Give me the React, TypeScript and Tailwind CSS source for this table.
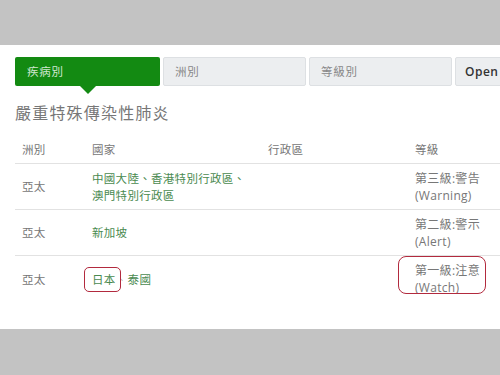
const font = { fontFamily: '"Open Sans", "Noto Sans CJK TC", sans-serif' };

const tabs = ["疾病別", "洲別", "等級別", "Open"];

export default function App() {
  return (
    <div className="w-[500px] h-[375px] bg-[#c3c3c3] flex flex-col overflow-hidden" style={font}>
      <div className="h-[45px] shrink-0" />
      <div className="h-[284px] shrink-0 bg-white pl-[15px] overflow-hidden">
        <div className="flex gap-[3px] mt-[12px] h-[29px] w-[560px]">
          {tabs.map((t, i) =>
            i === 0 ? (
              <div key={t} className="relative shrink-0 w-[145px] rounded-[2px] bg-[#138a12] text-[#cfe7cf] text-[11.5px] flex items-center pl-[12px] tracking-[0.8px]">
                {t}
                <div className="absolute left-[65px] top-[29px] w-0 h-0 border-l-[8px] border-r-[8px] border-t-[8px] border-l-transparent border-r-transparent border-t-[#138a12]" />
              </div>
            ) : (
              <div
                key={t}
                className={`shrink-0 w-[143px] rounded-[2px] border border-[#dde0e3] bg-[#eceef0] flex items-center ${
                  i === 3 ? "text-[#333] text-[12px] font-semibold tracking-[0.5px] pl-[9px]" : "text-[#888] text-[11.5px] tracking-[0.8px] pl-[11px]"
                }`}
              >
                {t}
              </div>
            )
          )}
        </div>
        <div className="mt-[15px] text-[16px] text-[#777] tracking-[1.2px] leading-[24px]">嚴重特殊傳染性肺炎</div>
        <div className="mt-[11px] text-[11.5px] text-[#777] tracking-[0.3px]">
          <div className="flex h-[28px] items-center border-b border-[#e2e2e2]">
            <div className="w-[77px] pl-[7px]">洲別</div>
            <div className="w-[176px]">國家</div>
            <div className="w-[147px]">行政區</div>
            <div>等級</div>
          </div>
          <div className="flex h-[46px] items-center border-b border-[#e2e2e2] leading-[17px]">
            <div className="w-[77px] pl-[7px]">亞太</div>
            <div className="w-[176px] text-[#4a8a50]">
              中國大陸、香港特別行政區、
              <br />
              澳門特別行政區
            </div>
            <div className="w-[147px]" />
            <div className="text-[12px]">
              第三級:警告
              <br />
              (Warning)
            </div>
          </div>
          <div className="flex h-[46px] items-center border-b border-[#e2e2e2] leading-[17px]">
            <div className="w-[77px] pl-[7px]">亞太</div>
            <div className="w-[176px] text-[#4a8a50]">新加坡</div>
            <div className="w-[147px]" />
            <div className="text-[12px]">
              第二級:警示
              <br />
              (Alert)
            </div>
          </div>
          <div className="flex h-[46px] items-center leading-[17px]">
            <div className="w-[77px] pl-[7px]">亞太</div>
            <div className="w-[176px] text-[#4a8a50] flex items-center">
              <span className="relative">
                日本
                <span className="absolute left-[-8px] top-[-4px] w-[37px] h-[25px] border-[1.5px] border-[#b22a3e] rounded-[5px]" />
              </span>
              <span className="text-[#bbb] w-[12px] text-[9px] text-center">、</span>
              <span>泰國</span>
            </div>
            <div className="w-[147px]" />
            <div className="relative text-[12px]">
              第一級:注意
              <br />
              (Watch)
              <span className="absolute left-[-17px] top-[-6px] w-[88px] h-[38px] border-[1.5px] border-[#b22a3e] rounded-[8px]" />
            </div>
          </div>
        </div>
      </div>
    </div>
  );
}
